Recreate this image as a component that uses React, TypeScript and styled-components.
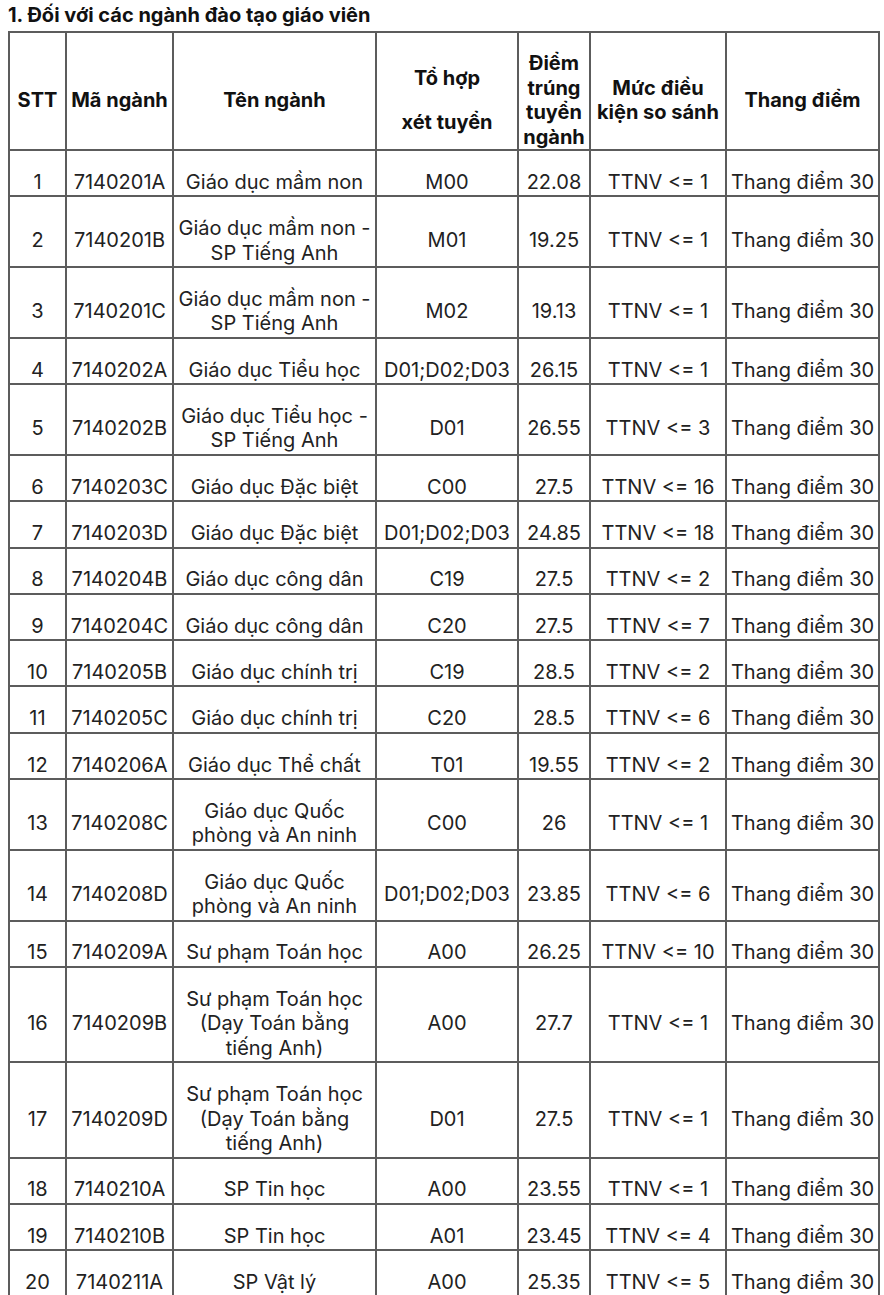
import React from "react";
import styled, { createGlobalStyle } from "styled-components";

const Global = createGlobalStyle`
  html, body { margin: 0; padding: 0; background: #ffffff; }
  body { padding: 0 8px; font-family: Inter, "Noto Sans", sans-serif; color: #222; }
`;

const Title = styled.h3`
  margin: 3px 0 4px;
  font-size: 20px;
  line-height: 24px;
  font-weight: 700;
  color: #111;
`;

const Table = styled.table`
  width: 870px;
  border-collapse: collapse;
  table-layout: fixed;
  border: 2px solid #5c5c5c;
`;

const Th = styled.th<{ $lh?: number }>`
  border: 2px solid #5c5c5c;
  padding: 18px 2px 0;
  font-size: 20px;
  line-height: ${(p) => p.$lh ?? 24.5}px;
  font-weight: 700;
  color: #111;
  text-align: center;
  vertical-align: middle;
`;

const Td = styled.td`
  border: 2px solid #5c5c5c;
  padding: 18.8px 1px 1px;
  font-size: 20px;
  line-height: 24.5px;
  font-weight: 400;
  color: #222;
  text-align: center;
  vertical-align: middle;
  white-space: nowrap;
`;

const widths = [57, 107, 203, 142, 72, 136, 153];

type Row = [string, string, string[], string, string, string];

const rows: Row[] = [
  ["1", "7140201A", ["Giáo dục mầm non"], "M00", "22.08", "TTNV <= 1"],
  ["2", "7140201B", ["Giáo dục mầm non -", "SP Tiếng Anh"], "M01", "19.25", "TTNV <= 1"],
  ["3", "7140201C", ["Giáo dục mầm non -", "SP Tiếng Anh"], "M02", "19.13", "TTNV <= 1"],
  ["4", "7140202A", ["Giáo dục Tiểu học"], "D01;D02;D03", "26.15", "TTNV <= 1"],
  ["5", "7140202B", ["Giáo dục Tiểu học -", "SP Tiếng Anh"], "D01", "26.55", "TTNV <= 3"],
  ["6", "7140203C", ["Giáo dục Đặc biệt"], "C00", "27.5", "TTNV <= 16"],
  ["7", "7140203D", ["Giáo dục Đặc biệt"], "D01;D02;D03", "24.85", "TTNV <= 18"],
  ["8", "7140204B", ["Giáo dục công dân"], "C19", "27.5", "TTNV <= 2"],
  ["9", "7140204C", ["Giáo dục công dân"], "C20", "27.5", "TTNV <= 7"],
  ["10", "7140205B", ["Giáo dục chính trị"], "C19", "28.5", "TTNV <= 2"],
  ["11", "7140205C", ["Giáo dục chính trị"], "C20", "28.5", "TTNV <= 6"],
  ["12", "7140206A", ["Giáo dục Thể chất"], "T01", "19.55", "TTNV <= 2"],
  ["13", "7140208C", ["Giáo dục Quốc", "phòng và An ninh"], "C00", "26", "TTNV <= 1"],
  ["14", "7140208D", ["Giáo dục Quốc", "phòng và An ninh"], "D01;D02;D03", "23.85", "TTNV <= 6"],
  ["15", "7140209A", ["Sư phạm Toán học"], "A00", "26.25", "TTNV <= 10"],
  ["16", "7140209B", ["Sư phạm Toán học", "(Dạy Toán bằng", "tiếng Anh)"], "A00", "27.7", "TTNV <= 1"],
  ["17", "7140209D", ["Sư phạm Toán học", "(Dạy Toán bằng", "tiếng Anh)"], "D01", "27.5", "TTNV <= 1"],
  ["18", "7140210A", ["SP Tin học"], "A00", "23.55", "TTNV <= 1"],
  ["19", "7140210B", ["SP Tin học"], "A01", "23.45", "TTNV <= 4"],
  ["20", "7140211A", ["SP Vật lý"], "A00", "25.35", "TTNV <= 5"],
];

const Lines: React.FC<{ lines: string[] }> = ({ lines }) => (
  <>
    {lines.map((l, i) => (
      <React.Fragment key={i}>
        {i > 0 && <br />}
        {l}
      </React.Fragment>
    ))}
  </>
);

export default function App() {
  return (
    <>
      <Global />
      <Title>1. Đối với các ngành đào tạo giáo viên</Title>
      <Table>
        <colgroup>
          {widths.map((w, i) => (
            <col key={i} style={{ width: w }} />
          ))}
        </colgroup>
        <thead>
          <tr>
            <Th>STT</Th>
            <Th>Mã ngành</Th>
            <Th>Tên ngành</Th>
            <Th $lh={44}>
              <Lines lines={["Tổ hợp", "xét tuyển"]} />
            </Th>
            <Th>
              <Lines lines={["Điểm", "trúng", "tuyển", "ngành"]} />
            </Th>
            <Th>
              <Lines lines={["Mức điều", "kiện so sánh"]} />
            </Th>
            <Th>Thang điểm</Th>
          </tr>
        </thead>
        <tbody>
          {rows.map((r) => (
            <tr key={r[0]}>
              <Td>{r[0]}</Td>
              <Td>{r[1]}</Td>
              <Td>
                <Lines lines={r[2]} />
              </Td>
              <Td>{r[3]}</Td>
              <Td>{r[4]}</Td>
              <Td>{r[5]}</Td>
              <Td>Thang điểm 30</Td>
            </tr>
          ))}
        </tbody>
      </Table>
    </>
  );
}
